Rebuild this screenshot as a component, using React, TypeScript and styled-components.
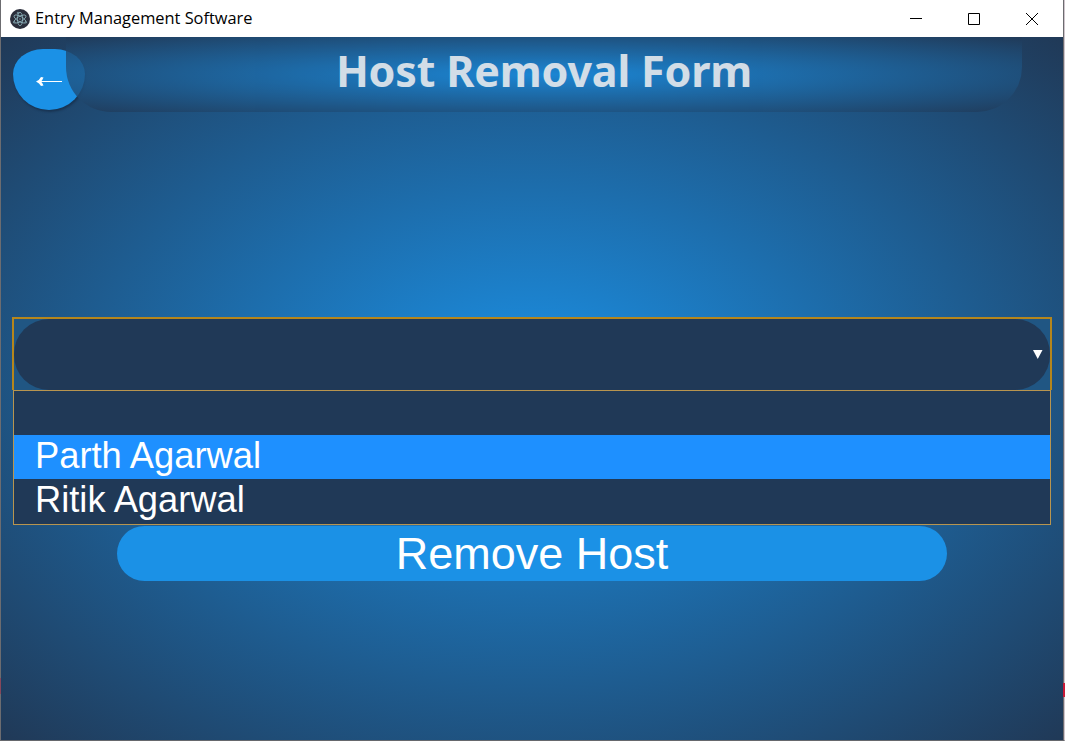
import React from "react";
import styled, { createGlobalStyle } from "styled-components";

const navy = "#203957";
const azure = "#1b91e6";

const GlobalStyle = createGlobalStyle`
  * { box-sizing: border-box; }
  html, body { margin: 0; height: 100%; overflow: hidden; background: #d9d3da; }
`;

const Window = styled.div`
  position: relative;
  width: 1065px;
  height: 741px;
  display: flex;
  flex-direction: column;
  border-left: 1px solid #6c6c70;
  border-right: 1px solid #cfc5cc;
  border-bottom: 1px solid #66686d;
  font-family: "Liberation Sans", Arial, sans-serif;
`;

const TitleBar = styled.div`
  flex: none;
  height: 37px;
  display: flex;
  align-items: center;
  padding-left: 9px;
  background: #fff;
  border-right: 1px solid #6c6c70;
`;

const WindowTitle = styled.span`
  flex: 1;
  margin-left: 5px;
  padding-bottom: 1px;
  color: #000;
  font: 16.4px/22px "Open Sans", sans-serif;
  letter-spacing: -0.01px;
  white-space: nowrap;
`;

const WindowControls = styled.div`
  display: flex;
  gap: 46px;
  margin-right: 25px;
`;

const Page = styled.main`
  flex: 1;
  min-height: 0;
  background: radial-gradient(${azure}, ${navy});
  border-right: 1px solid #6c6c70;
`;

const Header = styled.header`
  position: relative;
  height: 75px;
  padding: 12px 41px 0 12px;
  display: flex;
  align-items: flex-start;
`;

const BackButton = styled.button`
  flex: none;
  width: 72px;
  height: 61px;
  border: 0;
  padding: 4px 0 0;
  border-radius: 30px 30px 36px 36px / 25px 25px 36px 36px;
  background: ${azure};
  box-shadow: 1px 2px 2px rgba(20, 40, 65, 0.6);
  display: flex;
  align-items: center;
  justify-content: center;
`;

const Banner = styled.div`
  position: absolute;
  inset: 0 41px 0 65px;
  border-radius: 0 0 45px 45px;
  background: radial-gradient(${azure}, ${navy});
  opacity: 0.8;
  text-align: center;
`;

const Heading = styled.h1`
  margin: 0;
  color: #fff;
  font: bold 43px/68px "Noto Sans", sans-serif;
  letter-spacing: -0.16px;
  white-space: nowrap;
`;

const Form = styled.form`
  display: flex;
  flex-direction: column;
  padding: 205px 11px 0;
`;

const SelectFrame = styled.div`
  height: 73px;
  border: 2px solid #b5861c;
  border-bottom: 0;
  background: #205683;
`;

const SelectBox = styled.div`
  height: 71px;
  margin: 0;
  border-radius: 35px;
  background: ${navy};
  display: flex;
  align-items: center;
  justify-content: flex-end;
  padding-right: 7px;
`;

const Options = styled.ul`
  list-style: none;
  margin: 0 1px;
  padding: 0;
  height: 135px;
  border: 1px solid #b8954f;
  background: ${navy};
`;

const Option = styled.li<{ $active?: boolean }>`
  height: 44px;
  padding-left: 21px;
  color: #fff;
  background: ${(p) => (p.$active ? "#1e90ff" : "transparent")};
  font-size: 36.3px;
  line-height: 42px;
  white-space: nowrap;
`;

const SubmitButton = styled.button`
  align-self: center;
  width: 830px;
  height: 55px;
  margin-top: 1px;
  padding: 0;
  border: 0;
  border-radius: 27.5px;
  background: ${azure};
  color: #fff;
  font: 45px/55px "Liberation Sans", Arial, sans-serif;
`;

const EdgeMark = styled.span<{ $side: "left" | "right" }>`
  position: absolute;
  ${(p) => p.$side}: -1px;
  top: ${(p) => (p.$side === "left" ? 678 : 683)}px;
  width: ${(p) => (p.$side === "left" ? 1 : 2)}px;
  height: ${(p) => (p.$side === "left" ? 16 : 14)}px;
  background: ${(p) => (p.$side === "left" ? "#87475a" : "#c81937")};
`;

const AppIcon = () => (
  <svg width="20" height="20" viewBox="0 0 20 20" fill="none" stroke="#8fb4bd" strokeWidth=".8">
    <circle cx="10" cy="10" r="10" fill="#2b2e3b" stroke="none" />
    <ellipse cx="10" cy="10" rx="6.7" ry="2.6" transform="rotate(30 10 10)" />
    <ellipse cx="10" cy="10" rx="6.7" ry="2.6" transform="rotate(90 10 10)" />
    <ellipse cx="10" cy="10" rx="6.7" ry="2.6" transform="rotate(150 10 10)" />
    <circle cx="10" cy="10" r=".7" fill="#8fb4bd" stroke="none" />
    <circle cx="4.2" cy="13.3" r=".8" fill="#2b2e3b" />
    <circle cx="15.8" cy="13.3" r=".8" fill="#2b2e3b" />
    <circle cx="8" cy="4" r=".8" fill="#2b2e3b" />
  </svg>
);

const ControlIcon = ({ d }: { d: string }) => (
  <svg width="12" height="12" viewBox="0 0 12 12" fill="none" stroke="#000">
    <path d={d} />
  </svg>
);

export default function App() {
  return (
    <>
      <GlobalStyle />
      <Window>
        <TitleBar>
          <AppIcon />
          <WindowTitle>Entry Management Software</WindowTitle>
          <WindowControls>
            <ControlIcon d="M0 5.5H12" />
            <ControlIcon d="M.5 .5H11.5V11.5H.5Z" />
            <ControlIcon d="M0 0L12 12M12 0L0 12" />
          </WindowControls>
        </TitleBar>
        <Page>
          <Header>
            <BackButton aria-label="Back">
              <svg width="26" height="9" viewBox="0 0 26 9">
                <path d="M3 4.5H26" stroke="#fff" />
                <path d="M0 4.5Q3.5 3 5 0L7.5 .5Q6.5 3 5 4.5Q6.5 6 7.5 8.5L5 9Q3.5 6 0 4.5Z" fill="#fff" />
              </svg>
            </BackButton>
            <Banner>
              <Heading>Host Removal Form</Heading>
            </Banner>
          </Header>
          <Form>
            <SelectFrame>
              <SelectBox>
                <svg width="10" height="9" viewBox="0 0 10 9">
                  <path d="M0 0H9.5L4.75 9Z" fill="#fff" />
                </svg>
              </SelectBox>
            </SelectFrame>
            <Options>
              <Option />
              <Option $active>Parth Agarwal</Option>
              <Option>Ritik Agarwal</Option>
            </Options>
            <SubmitButton type="button">Remove Host</SubmitButton>
          </Form>
        </Page>
        <EdgeMark $side="left" />
        <EdgeMark $side="right" />
      </Window>
    </>
  );
}
